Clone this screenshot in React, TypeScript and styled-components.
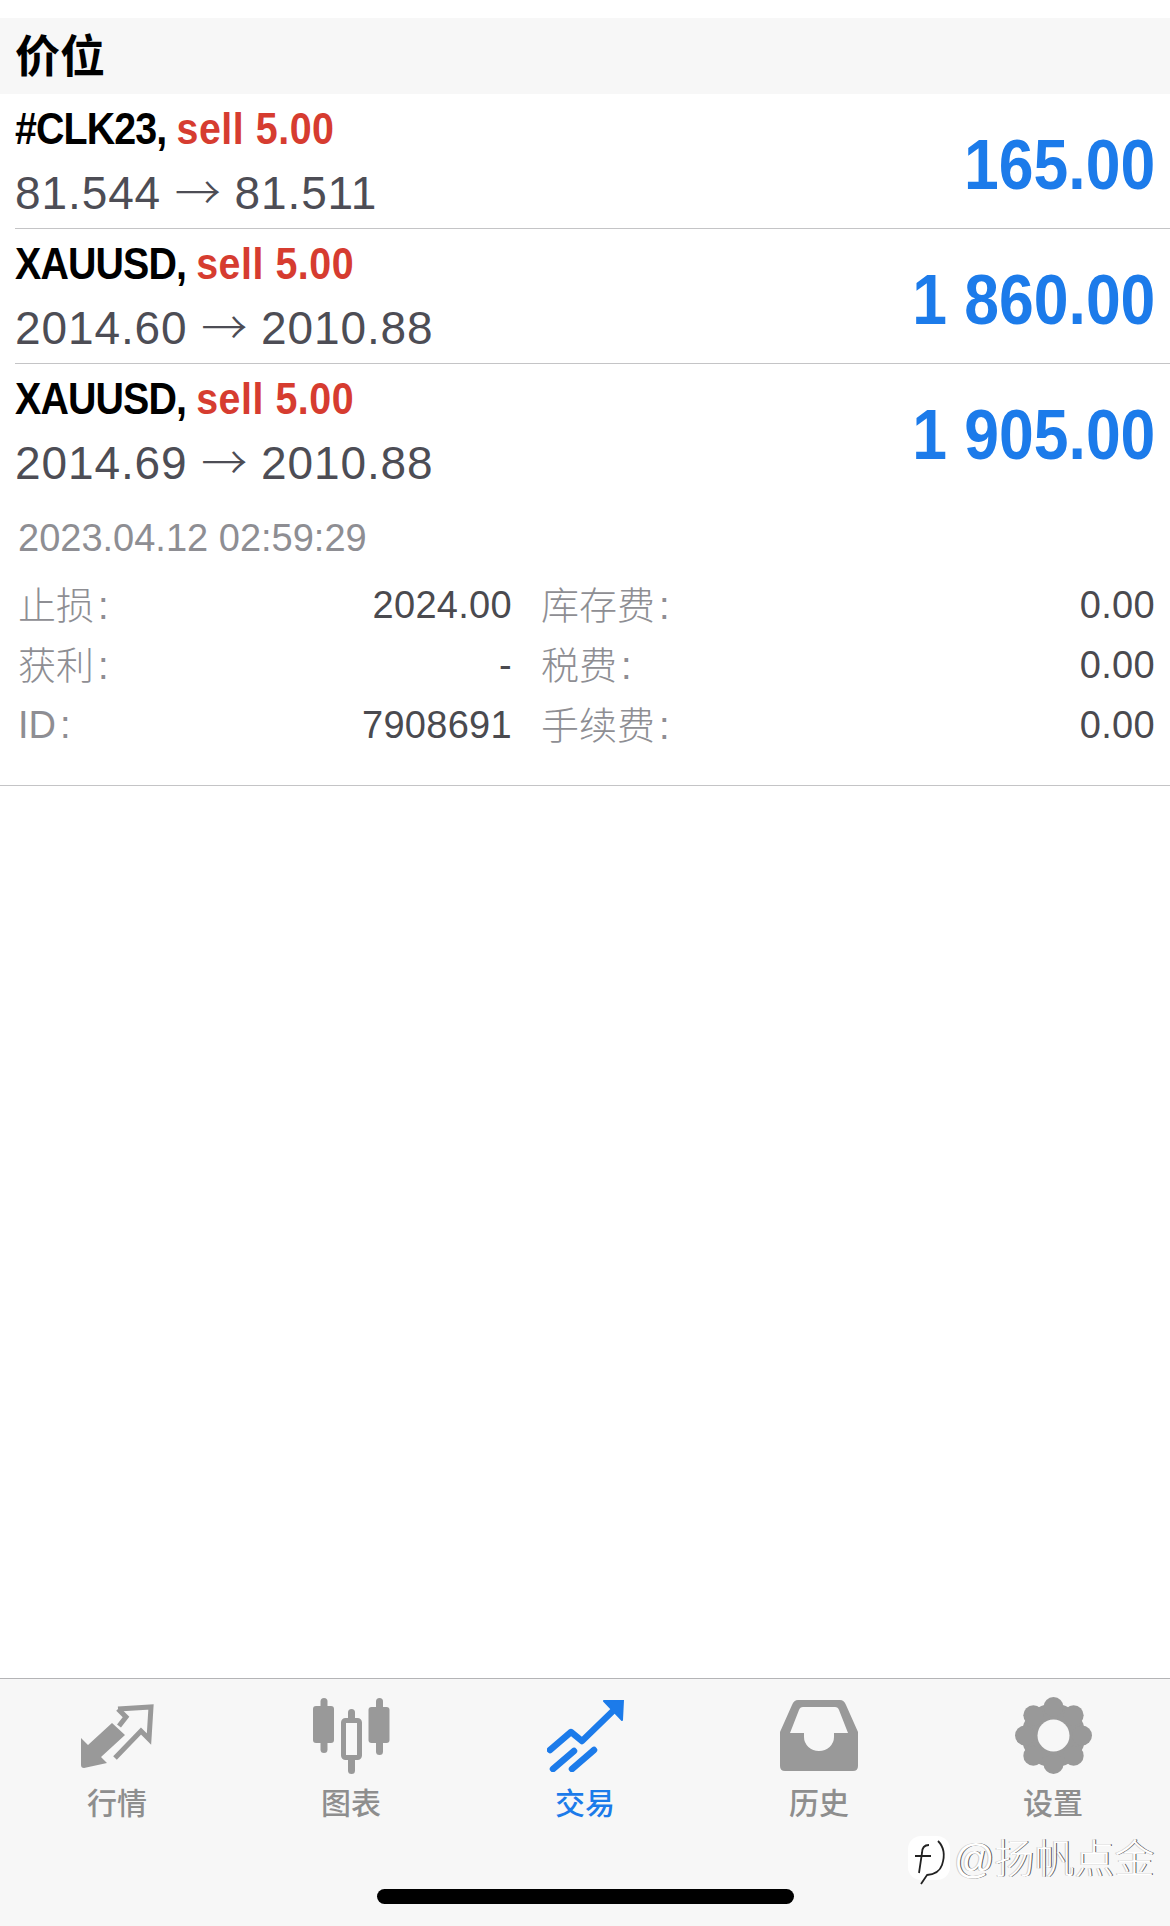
import React from 'react';
import styled, { createGlobalStyle } from 'styled-components';

const GlobalStyle = createGlobalStyle`
  html, body {
    margin: 0;
    padding: 0;
    background: #fff;
  }
  * {
    box-sizing: border-box;
  }
`;

const SANS = `"Liberation Sans", "Noto Sans CJK SC", sans-serif`;
const GREY_ICON = '#999999';
const BLUE = '#1c7bea';
const TAB_BG = '#f7f7f7';

const Page = styled.div`
  position: relative;
  width: 1170px;
  height: 1926px;
  display: flex;
  flex-direction: column;
  padding-top: 18px;
  background: #fff;
  font-family: ${SANS};
  overflow: hidden;
`;

const SectionHeader = styled.div`
  height: 76px;
  padding: 0 0 5px 15px;
  display: flex;
  align-items: center;
  background: #f7f7f7;
  color: #000;
  font-size: 45px;
  font-weight: 700;
`;

const DealRow = styled.div<{ $last?: boolean }>`
  height: 135px;
  margin-left: 15px;
  padding: 3px 15px 0 0;
  display: flex;
  justify-content: space-between;
  border-bottom: ${({ $last }) => ($last ? 'none' : '1px solid #c4c4c6')};
`;

const DealInfo = styled.div`
  display: flex;
  flex-direction: column;
`;

// the app uses a condensed bold face, no such font is installed here
const DealTitle = styled.div`
  height: 64px;
  line-height: 64px;
  font-size: 45px;
  font-weight: 700;
  letter-spacing: -1px;
  color: #000;
  white-space: pre;
  transform: scaleX(0.875);
  transform-origin: left center;
`;

const Side = styled.span`
  letter-spacing: 0.6px;
  color: #d63c30;
`;

const DealPrices = styled.div`
  height: 64px;
  line-height: 64px;
  font-size: 46px;
  letter-spacing: 0.9px;
  color: #4d4d55;
  white-space: pre;
`;

const ArrowGlyph = styled.span`
  font-family: "Noto Sans CJK SC", sans-serif;
  font-weight: 300;
  line-height: 0;
  letter-spacing: 0;
`;

const Profit = styled.div`
  align-self: center;
  margin-top: 3px;
  font-size: 71px;
  font-weight: 700;
  color: ${BLUE};
  transform: scaleX(0.88);
  transform-origin: right center;
`;

const DateLine = styled.div`
  height: 44px;
  line-height: 44px;
  margin: 17px 0 15px 18px;
  font-size: 38px;
  color: #8e8e93;
`;

const Details = styled.div`
  display: grid;
  grid-template-columns: 494px 614px;
  column-gap: 29px;
  padding: 0 15px 30px 18px;
  border-bottom: 1px solid #c4c4c6;
`;

const DetailRow = styled.div`
  height: 60px;
  display: flex;
  justify-content: space-between;
  align-items: center;
  font-size: 38px;
`;

const DetailLabel = styled.span<{ $latin?: boolean }>`
  padding-bottom: ${({ $latin }) => ($latin ? '0' : '6px')};
  font-weight: 300;
  color: #8e8e93;
`;

const Colon = styled.span`
  margin-left: 4px;
`;

const DetailValue = styled.span`
  letter-spacing: 0.3px;
  color: #4a4a4f;
`;

const TabBar = styled.div`
  margin-top: auto;
  height: 248px;
  display: flex;
  flex-direction: column;
  padding-top: 18px;
  background: ${TAB_BG};
  border-top: 1px solid #b4b4b6;
`;

const Tabs = styled.div`
  display: grid;
  grid-template-columns: repeat(5, 1fr);
`;

const Tab = styled.div<{ $active?: boolean }>`
  display: flex;
  flex-direction: column;
  align-items: center;
  color: ${({ $active }) => ($active ? BLUE : '#8e8e8e')};
`;

const TabIcon = styled.div`
  height: 77px;
  display: flex;
  align-items: center;
  justify-content: center;
`;

const TabLabel = styled.div`
  height: 40px;
  line-height: 40px;
  margin-top: 10px;
  font-size: 30px;
  font-weight: 500;
`;

const HomeIndicator = styled.div`
  align-self: center;
  width: 417px;
  height: 15px;
  margin-top: 65px;
  border-radius: 8px;
  background: #000;
`;

const Watermark = styled.div`
  position: absolute;
  left: 908px;
  top: 1836px;
  display: flex;
  align-items: flex-start;
  gap: 4px;
`;

const WatermarkLogo = styled.svg`
  display: block;
`;

const WatermarkText = styled.span`
  font-size: 40px;
  line-height: 46px;
  font-weight: 300;
  color: #fff;
  text-shadow: 1px 0 0 #555, -1px 0 0 #ccc;
`;

const MarketIcon = () => (
  <svg width="73" height="64" viewBox="0 0 73 64">
    <path d="M0 34 L7 41 L31 19 L44 31 L20 53 L26 59 L3 64 Q0 64 0 61 Z" fill={GREY_ICON} />
    <path
      d="M37 5 L70 3 L68 35 L60 27 L34 54 M37 5 L45 13 L38 22"
      fill="none"
      stroke={GREY_ICON}
      strokeWidth="5"
    />
  </svg>
);

const ChartIcon = () => (
  <svg width="77" height="76" viewBox="0 0 77 76" fill={GREY_ICON}>
    <rect x="7.5" y="0" width="7" height="55" rx="3.5" />
    <rect x="0" y="8" width="21" height="37" rx="3" />
    <rect x="35" y="11" width="7" height="14" rx="3.5" />
    <rect x="35" y="58" width="7" height="18" rx="3.5" />
    <rect x="30.5" y="22.5" width="16" height="37" rx="2" fill="none" stroke={GREY_ICON} strokeWidth="5" />
    <rect x="63" y="0" width="7" height="57" rx="3.5" />
    <rect x="55.5" y="9" width="21" height="36" rx="3" />
  </svg>
);

const TradeIcon = () => (
  <svg width="77" height="72" viewBox="0 0 77 72" fill="none">
    <path d="M3 50 L24 32 L35 41 L69 8" stroke={BLUE} strokeWidth="6.5" strokeLinecap="round" strokeLinejoin="round" />
    <path d="M57 1 L76 0 L75 20 Z" fill={BLUE} stroke={BLUE} strokeWidth="2" strokeLinejoin="round" />
    <path d="M6 69 L27 51 M25 69 L47 50" stroke={BLUE} strokeWidth="6.5" strokeLinecap="round" />
  </svg>
);

const HistoryIcon = () => (
  <svg width="78" height="71" viewBox="0 0 78 71">
    <path
      fillRule="evenodd"
      fill={GREY_ICON}
      d="M18 0 H60 Q64 0 66 5 L78 32 V66 Q78 71 73 71 H5 Q0 71 0 66 V32 L12 5 Q14 0 18 0 Z
         M23 7 H55 Q58 7 59 10 L68 33 H54 V37 A15 14 0 0 1 24 37 V33 H10 L19 10 Q20 7 23 7 Z"
    />
  </svg>
);

const GEAR_LOBES = [0, 45, 90, 135, 180, 225, 270, 315];

const SettingsIcon = () => (
  <svg width="77" height="77" viewBox="0 0 77 77" fill={GREY_ICON}>
    <circle cx="38.5" cy="38.5" r="32" />
    {GEAR_LOBES.map(angle => (
      <circle
        key={angle}
        cx={38.5 + 28.5 * Math.cos(angle * Math.PI / 180)}
        cy={38.5 + 28.5 * Math.sin(angle * Math.PI / 180)}
        r="10"
      />
    ))}
    <circle cx="38.5" cy="38.5" r="16" fill={TAB_BG} />
  </svg>
);

const deals = [
  { symbol: '#CLK23,', side: 'sell 5.00', open: '81.544', close: '81.511', profit: '165.00' },
  { symbol: 'XAUUSD,', side: 'sell 5.00', open: '2014.60', close: '2010.88', profit: '1 860.00' },
  { symbol: 'XAUUSD,', side: 'sell 5.00', open: '2014.69', close: '2010.88', profit: '1 905.00' },
];

const details = [
  { label: '止损', value: '2024.00' },
  { label: '库存费', value: '0.00' },
  { label: '获利', value: '-' },
  { label: '税费', value: '0.00' },
  { label: 'ID', value: '7908691', latin: true },
  { label: '手续费', value: '0.00' },
];

const tabs = [
  { label: '行情', icon: <MarketIcon /> },
  { label: '图表', icon: <ChartIcon /> },
  { label: '交易', icon: <TradeIcon />, active: true },
  { label: '历史', icon: <HistoryIcon /> },
  { label: '设置', icon: <SettingsIcon /> },
];

const App: React.FC = () => {
  return (
    <Page>
      <GlobalStyle />
      <SectionHeader>价位</SectionHeader>
      {deals.map((deal, i) => (
        <DealRow key={i} $last={i === deals.length - 1}>
          <DealInfo>
            <DealTitle>
              {deal.symbol} <Side>{deal.side}</Side>
            </DealTitle>
            <DealPrices>
              {deal.open} <ArrowGlyph>→</ArrowGlyph> {deal.close}
            </DealPrices>
          </DealInfo>
          <Profit>{deal.profit}</Profit>
        </DealRow>
      ))}
      <DateLine>2023.04.12 02:59:29</DateLine>
      <Details>
        {details.map(item => (
          <DetailRow key={item.label}>
            <DetailLabel $latin={item.latin}>
              {item.label}
              <Colon>:</Colon>
            </DetailLabel>
            <DetailValue>{item.value}</DetailValue>
          </DetailRow>
        ))}
      </Details>
      <TabBar>
        <Tabs>
          {tabs.map(tab => (
            <Tab key={tab.label} $active={tab.active}>
              <TabIcon>{tab.icon}</TabIcon>
              <TabLabel>{tab.label}</TabLabel>
            </Tab>
          ))}
        </Tabs>
        <HomeIndicator />
      </TabBar>
      <Watermark>
        <WatermarkLogo width="42" height="50" viewBox="0 0 42 50">
          <rect x="0" y="0" width="42" height="44" rx="13" fill="#fff" />
          <path
            d="M30 5 Q39 14 34 29 Q31 38 19 39 L13 48 M21 9 Q14 9 14 17 L11 37 M7 20 H23"
            fill="none"
            stroke="#222"
            strokeWidth="1.8"
          />
        </WatermarkLogo>
        <WatermarkText>@扬帆点金</WatermarkText>
      </Watermark>
    </Page>
  );
};

export default App;
